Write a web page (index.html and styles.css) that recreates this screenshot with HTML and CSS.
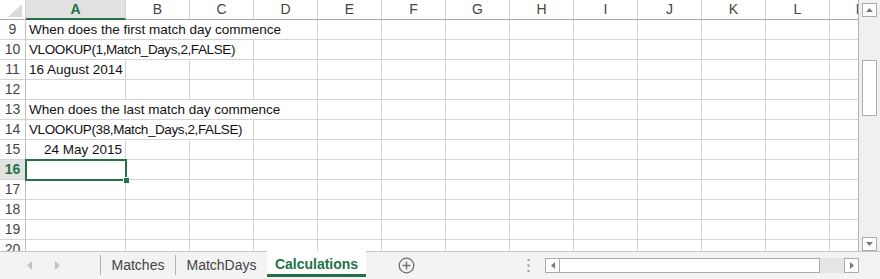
FILE: index.html
```html
<!DOCTYPE html>
<html lang="en">
  <head>
    <meta charset="UTF-8" />
    <title>Calculations</title>
    <link rel="stylesheet" href="styles.css">
  </head>
  <body>
    <div class="workbook">
      <div class="main">
        <div class="sheet-wrap">
          <div class="sheet">
            <!-- column headers -->
            <div class="corner">
              <svg width="25" height="19" viewBox="0 0 25 19"><polygon points="22,4 22,17 8,17" fill="#dadada" /></svg>
            </div>
            <div class="ch sel">A</div>
            <div class="ch">B</div>
            <div class="ch">C</div>
            <div class="ch">D</div>
            <div class="ch">E</div>
            <div class="ch">F</div>
            <div class="ch">G</div>
            <div class="ch">H</div>
            <div class="ch">I</div>
            <div class="ch">J</div>
            <div class="ch">K</div>
            <div class="ch">L</div>
            <div class="ch">M</div>

            <!-- row 9 -->
            <div class="rh">9</div>
            <div class="c span4">When does the first match day commence</div>
            <div class="c"></div><div class="c"></div><div class="c"></div><div class="c"></div><div class="c"></div>
            <div class="c"></div><div class="c"></div><div class="c"></div><div class="c"></div>

            <!-- row 10 -->
            <div class="rh">10</div>
            <div class="c span3 formula">VLOOKUP(1,Match_Days,2,FALSE)</div>
            <div class="c"></div><div class="c"></div><div class="c"></div><div class="c"></div><div class="c"></div>
            <div class="c"></div><div class="c"></div><div class="c"></div><div class="c"></div><div class="c"></div>

            <!-- row 11 -->
            <div class="rh">11</div>
            <div class="c num">16 August 2014</div>
            <div class="c"></div><div class="c"></div><div class="c"></div><div class="c"></div><div class="c"></div><div class="c"></div>
            <div class="c"></div><div class="c"></div><div class="c"></div><div class="c"></div><div class="c"></div><div class="c"></div>

            <!-- row 12 -->
            <div class="rh">12</div>
            <div class="c"></div><div class="c"></div><div class="c"></div><div class="c"></div><div class="c"></div><div class="c"></div><div class="c"></div>
            <div class="c"></div><div class="c"></div><div class="c"></div><div class="c"></div><div class="c"></div><div class="c"></div>

            <!-- row 13 -->
            <div class="rh">13</div>
            <div class="c span4">When does the last match day commence</div>
            <div class="c"></div><div class="c"></div><div class="c"></div><div class="c"></div><div class="c"></div>
            <div class="c"></div><div class="c"></div><div class="c"></div><div class="c"></div>

            <!-- row 14 -->
            <div class="rh">14</div>
            <div class="c span3 formula">VLOOKUP(38,Match_Days,2,FALSE)</div>
            <div class="c"></div><div class="c"></div><div class="c"></div><div class="c"></div><div class="c"></div>
            <div class="c"></div><div class="c"></div><div class="c"></div><div class="c"></div><div class="c"></div>

            <!-- row 15 -->
            <div class="rh">15</div>
            <div class="c num">24 May 2015</div>
            <div class="c"></div><div class="c"></div><div class="c"></div><div class="c"></div><div class="c"></div><div class="c"></div>
            <div class="c"></div><div class="c"></div><div class="c"></div><div class="c"></div><div class="c"></div><div class="c"></div>

            <!-- row 16 (active) -->
            <div class="rh sel">16</div>
            <div class="c active"></div>
            <div class="c"></div><div class="c"></div><div class="c"></div><div class="c"></div><div class="c"></div><div class="c"></div>
            <div class="c"></div><div class="c"></div><div class="c"></div><div class="c"></div><div class="c"></div><div class="c"></div>

            <!-- rows 17 - 20 -->
            <div class="rh">17</div>
            <div class="c"></div><div class="c"></div><div class="c"></div><div class="c"></div><div class="c"></div><div class="c"></div><div class="c"></div>
            <div class="c"></div><div class="c"></div><div class="c"></div><div class="c"></div><div class="c"></div><div class="c"></div>
            <div class="rh">18</div>
            <div class="c"></div><div class="c"></div><div class="c"></div><div class="c"></div><div class="c"></div><div class="c"></div><div class="c"></div>
            <div class="c"></div><div class="c"></div><div class="c"></div><div class="c"></div><div class="c"></div><div class="c"></div>
            <div class="rh">19</div>
            <div class="c"></div><div class="c"></div><div class="c"></div><div class="c"></div><div class="c"></div><div class="c"></div><div class="c"></div>
            <div class="c"></div><div class="c"></div><div class="c"></div><div class="c"></div><div class="c"></div><div class="c"></div>
            <div class="rh">20</div>
            <div class="c"></div><div class="c"></div><div class="c"></div><div class="c"></div><div class="c"></div><div class="c"></div><div class="c"></div>
            <div class="c"></div><div class="c"></div><div class="c"></div><div class="c"></div><div class="c"></div><div class="c"></div>
          </div>
        </div>

        <div class="vscroll">
          <div class="sbtn">
            <svg width="7" height="4" viewBox="0 0 7 4"><polygon points="0,4 7,4 3.5,0" fill="#7a7a7a" /></svg>
          </div>
          <div class="vthumb"></div>
          <div class="vtrack"></div>
          <div class="sbtn">
            <svg width="7" height="4" viewBox="0 0 7 4"><polygon points="0,0 7,0 3.5,4" fill="#7a7a7a" /></svg>
          </div>
        </div>
      </div>

      <div class="tabbar">
        <div class="nav">
          <svg width="5" height="9" viewBox="0 0 5 9"><polygon points="5,0 5,9 0,4.5" fill="#c2c2c2" /></svg>
          <svg width="5" height="9" viewBox="0 0 5 9"><polygon points="0,0 0,9 5,4.5" fill="#c2c2c2" /></svg>
        </div>
        <div class="tab tab-matches">Matches</div>
        <div class="tab tab-days">MatchDays</div>
        <div class="tab active">Calculations</div>
        <div class="add">
          <svg width="17" height="17" viewBox="0 0 17 17">
            <circle cx="8.5" cy="8.5" r="7.3" fill="none" stroke="#6f6f6f" stroke-width="1.3" />
            <line x1="8.5" y1="4.5" x2="8.5" y2="12.5" stroke="#6f6f6f" stroke-width="1.4" />
            <line x1="4.5" y1="8.5" x2="12.5" y2="8.5" stroke="#6f6f6f" stroke-width="1.4" />
          </svg>
        </div>
        <div class="dots">
          <svg width="3" height="13" viewBox="0 0 3 13">
            <rect x="0.5" y="0" width="2" height="2" fill="#9a9a9a" />
            <rect x="0.5" y="5.5" width="2" height="2" fill="#9a9a9a" />
            <rect x="0.5" y="11" width="2" height="2" fill="#9a9a9a" />
          </svg>
        </div>
        <div class="hscroll">
          <div class="sbtn h">
            <svg width="4" height="7" viewBox="0 0 4 7"><polygon points="4,0 4,7 0,3.5" fill="#7a7a7a" /></svg>
          </div>
          <div class="hthumb"></div>
          <div class="htrack"></div>
          <div class="sbtn h">
            <svg width="4" height="7" viewBox="0 0 4 7"><polygon points="0,0 0,7 4,3.5" fill="#7a7a7a" /></svg>
          </div>
        </div>
      </div>
    </div>
  </body>
</html>
```

FILE: styles.css
```css
body {
  margin: 0;
  background-color: #fff;
  font-family: "Liberation Sans", Arial, sans-serif;
  color: #000;
}
.workbook {
  width: 880px;
  height: 279px;
  overflow: hidden;
}
.main {
  display: flex;
  height: 251px;
}
.sheet-wrap {
  width: 858px;
  overflow: hidden;
  border-right: 1px solid #b4b4b4;
}
.sheet {
  display: grid;
  grid-template-columns: 26px 100px repeat(12, 64px);
  grid-auto-rows: 20px;
  font-size: 13.5px;
}
.sheet > div {
  box-sizing: border-box;
  border-right: 1px solid #d4d4d4;
  border-bottom: 1px solid #d4d4d4;
  line-height: 19px;
  white-space: nowrap;
  overflow: hidden;
}
.corner {
  border-bottom-color: #ababab !important;
}
.corner svg {
  display: block;
}
.ch {
  text-align: center;
  color: #444;
  font-size: 14px;
  border-bottom-color: #ababab !important;
}
.ch.sel {
  background-color: #e1e1e1;
  color: #217346;
  font-weight: bold;
  border-bottom: 2px solid #217346 !important;
}
.rh {
  text-align: center;
  color: #444;
  font-size: 14px;
  border-right-color: #c0c0c0 !important;
}
.rh.sel {
  background-color: #e1e1e1;
  color: #217346;
  font-weight: bold;
}
.c {
  padding: 0 3px;
  color: #111;
}
.span3 {
  grid-column: span 3;
}
.span4 {
  grid-column: span 4;
}
.formula {
  letter-spacing: -0.4px;
}
.num {
  text-align: right;
}
.sheet > .c.active {
  position: relative;
  overflow: visible;
  outline: 2px solid #217346;
  outline-offset: -1px;
  z-index: 1;
}
.c.active::after {
  content: "";
  position: absolute;
  right: -4px;
  bottom: -4px;
  width: 5px;
  height: 5px;
  background-color: #217346;
  border: 1px solid #fff;
  border-width: 1px 0 0 1px;
}

/* scrollbars */
.vscroll {
  width: 21px;
  background-color: #f0f0f0;
  display: flex;
  flex-direction: column;
  align-items: flex-start;
  padding: 3px 0 0 3px;
  box-sizing: border-box;
}
.sbtn {
  width: 15px;
  height: 14px;
  box-sizing: border-box;
  border: 1px solid #ababab;
  background-color: #fff;
  display: flex;
  align-items: center;
  justify-content: center;
}
.vthumb {
  margin-top: 43px;
  width: 15px;
  height: 56px;
  box-sizing: border-box;
  border: 1px solid #ababab;
  background-color: #fff;
}
.vtrack {
  flex: 1;
}

/* sheet tabs */
.tabbar {
  display: flex;
  height: 28px;
  box-sizing: border-box;
  border-top: 1px solid #c6c6c6;
  background-color: #f3f3f3;
  font-size: 14px;
  color: #444;
}
.nav {
  width: 100px;
  display: flex;
  align-items: center;
  padding-left: 27px;
  gap: 23px;
  box-sizing: border-box;
}
.tab {
  box-sizing: border-box;
  margin: 3px 0 4px;
  border-left: 1px solid #b4b4b4;
  display: flex;
  align-items: center;
  justify-content: center;
}
.tab-matches {
  width: 75px;
}
.tab-days {
  width: 92px;
}
.tab.active {
  width: 99px;
  margin: -1px 0 2px;
  border-left: none;
  border-bottom: 3px solid #217346;
  background-color: #fff;
  color: #217346;
  font-weight: bold;
  padding-top: 2px;
}
.add {
  margin-left: 32px;
  display: flex;
  align-items: center;
}
.add svg {
  display: block;
}
.dots {
  margin-left: 112px;
  display: flex;
  align-items: center;
}
.hscroll {
  margin-left: 15px;
  margin-top: 6px;
  display: flex;
  height: 15px;
}
.sbtn.h {
  width: 15px;
  height: 15px;
}
.hthumb {
  width: 260px;
  box-sizing: border-box;
  border: 1px solid #ababab;
  border-left: none;
  background-color: #fff;
}
.htrack {
  width: 24px;
  background-color: #e6e6e6;
}
```
